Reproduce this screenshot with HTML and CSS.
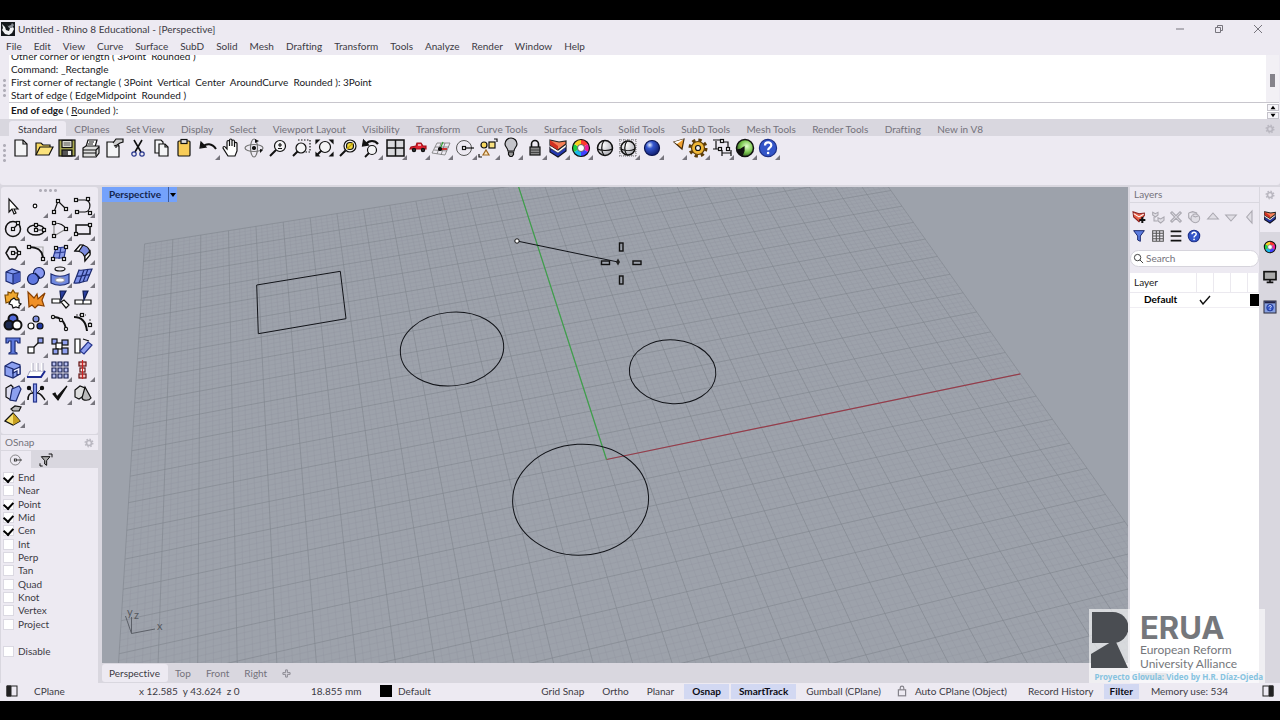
FILE: index.html
```html
<!DOCTYPE html>
<html lang="en">
<head>
<meta charset="utf-8">
<title>Untitled - Rhino 8 Educational - [Perspective]</title>
<link rel="stylesheet" href="styles.css">
</head>
<body>
<svg class="defs" aria-hidden="true">
  <defs>
    <symbol id="more" viewBox="0 0 24 24"><path d="M24 19v5h-5z" fill="#77757d" stroke="none"/></symbol>
    <symbol id="n" viewBox="0 0 4 4" overflow="visible"><rect x=".5" y=".5" width="3" height="3" fill="#fff" stroke="#111" stroke-width="1.2"/></symbol>
    <symbol id="gear" viewBox="0 0 12 12"><circle cx="6" cy="6" r="3" fill="none" stroke="#b9b7c0" stroke-width="2"/><circle cx="6" cy="6" r="4.6" fill="none" stroke="#b9b7c0" stroke-width="1.6" stroke-dasharray="1.8 1.8"/></symbol>
    <symbol id="layers" viewBox="0 0 24 24"><path d="M4 12v4l8 5 8-6v-5l-8 6z" fill="#2338b0" stroke="#112"/><path d="M4 9v3l8 5 8-6V8l-8 6z" fill="#fff" stroke="#334" stroke-width=".6"/><path d="M4 4l9 2 7-1v3l-8 6-8-5z" fill="#f58058" stroke="#222"/><path d="M4 4v5l8 5v-4z" fill="#d03020" stroke="none"/></symbol>
    <symbol id="help" viewBox="0 0 24 24"><circle cx="12" cy="12" r="8.6" fill="#3355c8" stroke="#1c2f88"/><path d="M9 9.5c0-4 6.300-4 6.300-.3 0 2.400-3.200 2.400-3.200 5" fill="none" stroke="#fff" stroke-width="2.200"/><circle cx="12.100" cy="17" r="1.300" fill="#fff" stroke="none"/></symbol>
    <symbol id="wheel" viewBox="0 0 24 24"><g fill="none" stroke-width="5"><path d="M12 6a6 6 0 0 1 5.200 3" stroke="#ff3b30"/><path d="M17.200 9a6 6 0 0 1 0 6" stroke="#f0209a"/><path d="M17.200 15a6 6 0 0 1-5.200 3" stroke="#4040ff"/><path d="M12 18a6 6 0 0 1-5.200-3" stroke="#18b8e8"/><path d="M6.800 15a6 6 0 0 1 0-6" stroke="#20d040"/><path d="M6.800 9a6 6 0 0 1 5.200-3" stroke="#f8d020"/></g><circle cx="12" cy="12" r="8.500" fill="none" stroke="#111"/><circle cx="12" cy="12" r="3.500" fill="#fff" stroke="#444" stroke-width=".8"/></symbol>
    <symbol id="snap" viewBox="0 0 24 24"><circle cx="11" cy="12" r="7.500" fill="none" stroke="#555" stroke-width="1"/><path d="M12 12h9" stroke="#111" fill="none" stroke-width="1.200"/><rect x="9.500" y="10.500" width="3" height="3" fill="#fff" stroke="#111" stroke-width="1.200"/></symbol>
    <radialGradient id="gBlue" cx=".35" cy=".3" r=".8"><stop offset="0" stop-color="#e8f0ff"/><stop offset=".3" stop-color="#3558d0"/><stop offset="1" stop-color="#0a1460"/></radialGradient>
    <radialGradient id="gWhite" cx=".35" cy=".3" r=".8"><stop offset="0" stop-color="#fff"/><stop offset="1" stop-color="#a8a8b0"/></radialGradient>
    <radialGradient id="gGreen" cx=".6" cy=".4" r=".7"><stop offset="0" stop-color="#e4ffd0"/><stop offset=".5" stop-color="#7cc850"/><stop offset="1" stop-color="#1c4010"/></radialGradient>
  </defs>
</svg>

<div class="app">
  <header class="title-bar">
    <svg class="app-icon" viewBox="0 0 14 14" aria-hidden="true"><rect width="14" height="14" fill="#15181c"/><path d="M1 2l3 3 1 3 3 1 1-3 3-1 1 2-2 4-3 2-4-1-3-4 1-2z" fill="#f2f2f4"/><path d="M5 1l2 3 3-1 1-2 2 2-2 3-3 0z" fill="#888c94"/></svg>
    <h1>Untitled - Rhino 8 Educational - [Perspective]</h1>
    <div class="window-buttons">
      <button aria-label="Minimize"><svg viewBox="0 0 10 10"><path d="M1 5h8"/></svg></button>
      <button aria-label="Restore"><svg viewBox="0 0 10 10"><path d="M1.500 3.500h5v5h-5zM3.500 3V1.500h5v5H7"/></svg></button>
      <button aria-label="Close"><svg viewBox="0 0 10 10"><path d="M1 1l8 8M9 1l-8 8"/></svg></button>
    </div>
  </header>

  <nav class="menu-bar" aria-label="Menu">
    <button>File</button><button>Edit</button><button>View</button><button>Curve</button><button>Surface</button><button>SubD</button><button>Solid</button><button>Mesh</button><button>Drafting</button><button>Transform</button><button>Tools</button><button>Analyze</button><button>Render</button><button>Window</button><button>Help</button>
  </nav>

  <section class="command" aria-label="Command line">
    <div class="grip grip-v"></div>
    <div class="command-body">
      <div class="history">
        <div class="history-text">
          <p>Other corner or length ( 3Point&nbsp; Rounded )</p>
          <p>Command: _Rectangle</p>
          <p>First corner of rectangle ( 3Point&nbsp; Vertical&nbsp; Center&nbsp; AroundCurve&nbsp; Rounded ): 3Point</p>
          <p>Start of edge ( EdgeMidpoint&nbsp; Rounded )</p>
        </div>
        <div class="scroll"><div class="thumb"></div></div>
      </div>
      <div class="prompt">
        <p><b>End of edge</b> ( <u>R</u>ounded ):</p>
        <div class="spin">
          <button aria-label="Previous"><svg viewBox="0 0 10 6"><path d="M5 1l3 4H2z"/></svg></button>
          <button aria-label="Next"><svg viewBox="0 0 10 6"><path d="M5 5l3-4H2z"/></svg></button>
        </div>
      </div>
    </div>
  </section>

  <section class="tools" aria-label="Toolbars">
    <div class="tool-tabs">
      <div class="tab-list">
        <button class="on">Standard</button><button>CPlanes</button><button>Set View</button><button>Display</button><button>Select</button><button>Viewport Layout</button><button>Visibility</button><button>Transform</button><button>Curve Tools</button><button>Surface Tools</button><button>Solid Tools</button><button>SubD Tools</button><button>Mesh Tools</button><button>Render Tools</button><button>Drafting</button><button>New in V8</button>
      </div>
      <svg class="gear" viewBox="0 0 12 12"><use href="#gear"/></svg>
    </div>
    <div class="tool-row">
      <div class="grip grip-v"></div>
      <div class="tool-icons">
        <button aria-label="New"><svg class="i" viewBox="0 0 24 24"><path d="M6 4h8l4 4v12H6z" fill="#f4f4f6"/><path d="M14 4v4h4"/></svg></button>
        <button aria-label="Open"><svg class="i" viewBox="0 0 24 24"><path d="M4 19V7h5l2 2h7v3" fill="#f7d860"/><path d="M4 19l4-8h13l-4 8z" fill="#fbe27c"/></svg></button>
        <button aria-label="Save"><svg class="i" viewBox="0 0 24 24"><rect x="4" y="4" width="16" height="16" fill="#a8a850"/><rect x="7" y="4.500" width="10" height="7" fill="#f2f2e8"/><rect x="7" y="14" width="10" height="6" fill="#555"/><rect x="13" y="15" width="3" height="4" fill="#eee" stroke="none"/><path d="M8.500 7h7M8.500 9h7" stroke-width=".8"/><use href="#more"/></svg></button>
        <button aria-label="Print"><svg class="i" viewBox="0 0 24 24"><path d="M7 11l2-7h9l-2 7" fill="#fff"/><path d="M4 12l3-2h13v7l-3 4H4z" fill="#ddd"/><path d="M4 14h13v6M17 14l3-3M4 17h13M10 6h5M9 8h5"/></svg></button>
        <button aria-label="Properties"><svg class="i" viewBox="0 0 24 24"><path d="M5 6h9l3 4v11H5z" fill="#f4f4f6"/><path d="M11 7l3-4h7v3l-3 1-3 2-3 1" fill="#ccc"/><path d="M14 12v-2h3" /></svg></button>
        <button aria-label="Cut"><svg class="i" viewBox="0 0 24 24"><path d="M8 4l7 12M16 4L9 16" stroke-width="1.600"/><circle cx="8" cy="18" r="2.200" stroke="#26358c"/><circle cx="16" cy="18" r="2.200" stroke="#26358c"/></svg></button>
        <button aria-label="Copy"><svg class="i" viewBox="0 0 24 24"><path d="M6 4h6l2 2v11H6z" fill="#f4f4f6"/><path d="M10 8h6l3 3v9h-9z" fill="#f4f4f6"/><path d="M16 8v3h3"/></svg></button>
        <button aria-label="Paste"><svg class="i" viewBox="0 0 24 24"><rect x="6" y="5" width="12" height="15" rx="1" fill="#f8cc58"/><rect x="9" y="3.500" width="6" height="4" fill="#ddd"/></svg></button>
        <button aria-label="Undo"><svg class="i" viewBox="0 0 24 24"><path d="M7 11c3-4 9-4 13 2" stroke-width="2"/><path d="M4 12l1-6 5 5z" fill="#111"/><use href="#more"/></svg></button>
        <button aria-label="Pan"><svg class="i" viewBox="0 0 24 24"><path d="M9 20L4 12c0-2 2-2 3 0l1 1V6c0-2 2.500-2 2.500 0v4V4.500c0-2 2.500-2 2.500 0V10V5.500c0-2 2.500-2 2.500 0V11V7.500c0-1.500 2.500-1.500 2.500 0V15l-2 5z" fill="#fff"/></svg></button>
        <button aria-label="Rotate view"><svg class="i" viewBox="0 0 24 24"><ellipse cx="12" cy="12" rx="9" ry="3.500" stroke="#777"/><ellipse cx="12" cy="12" rx="3.500" ry="9" stroke="#777"/><circle cx="12" cy="12" r="1.500" fill="#111"/><path d="M13 3l4 2-4 2zM18 13l3 1-3 3z" fill="#111" stroke="none"/></svg></button>
        <button aria-label="Zoom"><svg class="i" viewBox="0 0 24 24"><circle cx="14" cy="10" r="5.500" fill="#f4f4f6"/><path d="M10 14l-6 6" stroke-width="2"/><path d="M14 7v4M12 9h4M12 12.500h4"/></svg></button>
        <button aria-label="Zoom window"><svg class="i" viewBox="0 0 24 24"><path d="M9 4h12v12h-5" stroke-dasharray="1.500 1.500"/><circle cx="12" cy="12" r="5" fill="#f4f4f6"/><path d="M8.500 15.500L4 20" stroke-width="2"/></svg></button>
        <button aria-label="Zoom extents"><svg class="i" viewBox="0 0 24 24"><path d="M4 7V4h3zM18 4h3v3zM21 17v3h-3zM4 17v3h3z" fill="#111"/><circle cx="13" cy="11" r="5.500" fill="#f4f4f6"/><path d="M9.500 14.500L5 19" stroke-width="2"/></svg></button>
        <button aria-label="Zoom selected"><svg class="i" viewBox="0 0 24 24"><circle cx="14" cy="10" r="6" fill="#f4f4f6"/><circle cx="14" cy="10" r="3.500" fill="#f0d840"/><path d="M9.500 14.500L4 20" stroke-width="2"/><path d="M11 13l6-6" stroke="#c8a800"/></svg></button>
        <button aria-label="Undo view change"><svg class="i" viewBox="0 0 24 24"><circle cx="13" cy="14" r="4.500" fill="#f4f4f6"/><path d="M10 17l-4 4" stroke-width="1.800"/><path d="M7 8c3-4 9-4 12 0" stroke-width="2.200"/><path d="M3.500 10l1-6 5 5z" fill="#111"/><use href="#more"/></svg></button>
        <button aria-label="Four viewports"><svg class="i" viewBox="0 0 24 24"><rect x="4" y="4" width="17" height="16" fill="#d8d8dc" stroke-width="1.500"/><path d="M12.500 4v16M4 12h17" stroke-width="1.500"/><use href="#more"/></svg></button>
        <button aria-label="Right view"><svg class="i" viewBox="0 0 24 24"><path d="M4 13l1-2 5-1 1-3h4l2 3h3v3H4z" fill="#e02030" stroke="#a01018"/><circle cx="8" cy="14" r="1.600" fill="#333"/><circle cx="17" cy="14" r="1.600" fill="#333"/><path d="M12 9h3" stroke="#fff"/><use href="#more"/></svg></button>
        <button aria-label="Set CPlane"><svg class="i" viewBox="0 0 24 24"><path d="M8 7h13l-5 12-13-2zM6 11l14 0M5 14l13 1M12 7l-4 11M16 7l-4 12" stroke="#777" stroke-width=".8"/><path d="M11 13h7" stroke="#d02020" stroke-width="1.800"/><path d="M11 13l3-7" stroke="#30a030"/><circle cx="11" cy="13" r="1.500" fill="#111"/><use href="#more"/></svg></button>
        <button aria-label="Object snap"><svg class="i" viewBox="0 0 24 24"><use href="#snap"/><use href="#more"/></svg></button>
        <button aria-label="Select"><svg class="i" viewBox="0 0 24 24"><circle cx="8" cy="9" r="3" fill="#f8d860"/><rect x="13" y="6" width="6" height="6" fill="#f8e080"/><path d="M7 19h6l-3-5z" fill="#fbe8c0" stroke="#a06820"/><path d="M18 3h3v3M3 18v3h3"/><use href="#more"/></svg></button>
        <button aria-label="Hide"><svg class="i" viewBox="0 0 24 24"><path d="M9 15c0-3-3-4-3-7a6 6 0 0 1 12 0c0 3-3 4-3 7z" fill="#c4c4ca"/><path d="M9.500 16h5v2.500l-1.500 2h-2l-1.500-2z" fill="#999"/><use href="#more"/></svg></button>
        <button aria-label="Lock"><svg class="i" viewBox="0 0 24 24"><path d="M8.500 11V8a3.500 3.500 0 0 1 7 0v3" stroke-width="1.600"/><rect x="7" y="11" width="10" height="8" fill="#888"/><path d="M7 14h10M7 16.500h10" stroke="#333" stroke-width=".8"/><use href="#more"/></svg></button>
        <button aria-label="Layers"><svg class="i" viewBox="0 0 24 24"><use href="#layers"/><use href="#more"/></svg></button>
        <button aria-label="Object properties"><svg class="i" viewBox="0 0 24 24"><use href="#wheel"/><use href="#more"/></svg></button>
        <button aria-label="Shade"><svg class="i" viewBox="0 0 24 24"><circle cx="12" cy="12" r="7.500" fill="url(#gWhite)" stroke-width="1.500"/><path d="M11 4.500c-3 4-3 11 0 15M4.500 13c4 2 11 2 15 0"/></svg></button>
        <button aria-label="Shade options"><svg class="i" viewBox="0 0 24 24"><path d="M3 4h18M3 8h18M3 12h18M3 16h18M3 20h18M4 3v18M8 3v18M12 3v18M16 3v18M20 3v18" stroke="#555" stroke-width=".8" stroke-dasharray="1 1"/><circle cx="12" cy="12" r="7" fill="url(#gWhite)" stroke-width="1.500"/><path d="M11 5c-3 4-3 10 0 14M5 13c4 2 10 2 14 0"/><use href="#more"/></svg></button>
        <button aria-label="Render"><svg class="i" viewBox="0 0 24 24"><circle cx="12" cy="12" r="7.500" fill="url(#gBlue)" stroke="#0a1450"/><use href="#more"/></svg></button>
        <button aria-label="Spotlight"><svg class="i" viewBox="0 0 24 24"><path d="M11 6l10-3-2 10z" fill="#f0a030" stroke="#442a08"/><path d="M11 6l10-3-7 5z" fill="#fff" stroke="none"/><use href="#more"/></svg></button>
        <button aria-label="Options"><svg class="i" viewBox="0 0 24 24"><circle cx="12" cy="12" r="8" stroke="#5c3c08" stroke-width="3" stroke-dasharray="3.300 3"/><circle cx="12" cy="12" r="6.500" fill="#f0b838" stroke="#5c3c08"/><circle cx="12" cy="12" r="2.500" fill="#f4f4f6"/><use href="#more"/></svg></button>
        <button aria-label="Dimensions"><svg class="i" viewBox="0 0 24 24"><path d="M3 4h8M3 13h6M6 5v8M12 17h9M12 14v6M21 14v6M13 6h5v6"/><use href="#n" x="10" y="3" width="4" height="4"/><use href="#n" x="8" y="11" width="4" height="4"/><use href="#n" x="16" y="11" width="4" height="4"/><use href="#more"/></svg></button>
        <button aria-label="Grasshopper"><svg class="i" viewBox="0 0 24 24"><circle cx="12" cy="12" r="8.500" fill="url(#gGreen)" stroke-width="1.500"/><path d="M4 14l4-1 3-2 0 4-2 5a9 9 0 0 1-5-6z" fill="#111"/><use href="#more"/></svg></button>
        <button aria-label="Help"><svg class="i" viewBox="0 0 24 24"><use href="#help"/><use href="#more"/></svg></button>
      </div>
    </div>
  </section>

  <main class="work">
    <aside class="left">
      <section class="palette" aria-label="Main tools">
        <div class="grip grip-h"></div>
        <div class="palette-grid">
          <button aria-label="Pointer"><svg class="i" viewBox="0 0 24 24"><path d="M8 5v13l3-3 2 5 2-1-2-4h4z" fill="#fff"/></svg></button>
          <button aria-label="Point"><svg class="i" viewBox="0 0 24 24"><circle cx="11" cy="12" r="1.800" fill="#fff"/><use href="#more"/></svg></button>
          <button aria-label="Polyline"><svg class="i" viewBox="0 0 24 24"><path d="M6 18l4-11 8 8"/><use href="#n" x="4" y="16" width="4" height="4"/><use href="#n" x="8" y="5" width="4" height="4"/><use href="#n" x="16" y="13" width="4" height="4"/><use href="#more"/></svg></button>
          <button aria-label="Curve"><svg class="i" viewBox="0 0 24 24"><path d="M5 6h9c7 0 6 12 0 12H6" /><use href="#n" x="3" y="4" width="4" height="4"/><use href="#n" x="15" y="3" width="4" height="4"/><use href="#n" x="4" y="16" width="4" height="4"/><use href="#n" x="17" y="17" width="4" height="4"/><use href="#more"/></svg></button>
          <button aria-label="Circle"><svg class="i" viewBox="0 0 24 24"><circle cx="12" cy="12" r="7.500" stroke-width="1.500"/><path d="M12 12l5-5"/><use href="#n" x="10" y="10" width="4" height="4"/><use href="#n" x="15" y="4" width="4" height="4"/><use href="#more"/></svg></button>
          <button aria-label="Ellipse"><svg class="i" viewBox="0 0 24 24"><ellipse cx="12" cy="13" rx="8.500" ry="5" stroke-width="1.500"/><path d="M12 13V8M12 13h8"/><use href="#n" x="10" y="11" width="4" height="4"/><use href="#n" x="10" y="6" width="4" height="4"/><use href="#n" x="18" y="11" width="4" height="4"/><use href="#more"/></svg></button>
          <button aria-label="Arc"><svg class="i" viewBox="0 0 24 24"><path d="M6 19V6" stroke="#888"/><path d="M6 19l12-7" stroke="#888"/><path d="M6 6c6 0 10 2 12 6"/><use href="#n" x="4" y="4" width="4" height="4"/><use href="#n" x="16" y="10" width="4" height="4"/><use href="#n" x="4" y="17" width="4" height="4"/><use href="#more"/></svg></button>
          <button aria-label="Rectangle"><svg class="i" viewBox="0 0 24 24"><rect x="5" y="8" width="14" height="9" stroke-width="1.500"/><use href="#n" x="17" y="6" width="4" height="4"/><use href="#n" x="3" y="15" width="4" height="4"/><use href="#more"/></svg></button>
          <button aria-label="Polygon"><svg class="i" viewBox="0 0 24 24"><path d="M5 12l3.500-6h6l3.500 6-3.500 6h-6z" stroke-width="1.500"/><path d="M12 12h6"/><use href="#n" x="10" y="10" width="4" height="4"/><use href="#n" x="16" y="10" width="4" height="4"/><use href="#more"/></svg></button>
          <button aria-label="Fillet curves"><svg class="i" viewBox="0 0 24 24"><path d="M5 6h14v13" stroke="#aaa"/><path d="M5 6c9 0 14 3 14 13" stroke-width="2"/><use href="#n" x="3" y="4" width="4" height="4"/><use href="#n" x="17" y="16" width="4" height="4"/><use href="#more"/></svg></button>
          <button aria-label="Surface from points"><svg class="i" viewBox="0 0 24 24"><path d="M8 7l10-1-2 11-11 0z" fill="#8c9ce8" stroke="#26358c"/><path d="M13 6l-2 12M6 12l11-1" stroke="#26358c"/><use href="#n" x="6" y="5" width="4" height="4"/><use href="#n" x="16" y="4" width="4" height="4"/><use href="#n" x="14" y="16" width="4" height="4"/><use href="#n" x="3" y="16" width="4" height="4"/><use href="#more"/></svg></button>
          <button aria-label="Surface fillet"><svg class="i" viewBox="0 0 24 24"><path d="M4 10l5-6c6 0 10 3 10 9l-5 6c0-6-4-9-10-9z" fill="#7c8ce0"/><path d="M4 10l5-6 3 0-4 6zM14 15l5-5v4l-5 6z" fill="#fff"/><use href="#more"/></svg></button>
          <button aria-label="Box"><svg class="i" viewBox="0 0 24 24"><path d="M5 8l6-3 8 3v9l-7 3-7-3z" fill="#8098f0" stroke="#1c2a70"/><path d="M12 10l7-2v9l-7 3z" fill="#4a60c8" stroke="none"/><path d="M5 8l7 2 7-2M12 10v10" stroke="#1c2a70"/><use href="#more"/></svg></button>
          <button aria-label="Boolean union"><svg class="i" viewBox="0 0 24 24"><circle cx="15" cy="9" r="5.500" fill="#8898f0" stroke="#101c50"/><circle cx="9" cy="15" r="5.500" fill="#6078e0" stroke="#101c50"/><path d="M11 9l5 5" stroke="#101c50"/><use href="#more"/></svg></button>
          <button aria-label="Project curves"><svg class="i" viewBox="0 0 24 24"><ellipse cx="12" cy="5" rx="5" ry="2"/><path d="M3 10c6 3 12 3 18 0v9c-6 3-12 3-18 0z" fill="#7088e0" stroke="#1c2a70"/><ellipse cx="12" cy="16" rx="4.500" ry="2.200" fill="#fff" stroke="#99a"/><use href="#more"/></svg></button>
          <button aria-label="Mesh"><svg class="i" viewBox="0 0 24 24"><path d="M8 6c4 1 7-1 13-1l-5 12c-4 0-7 3-13 2z" fill="#7c90e8" stroke="#1c2a70"/><path d="M6 12c4 1 8-2 13-1M13 6l-5 13M17 5l-5 13" stroke="#1c2a70"/><use href="#more"/></svg></button>
          <button aria-label="Explode options"><svg class="i" viewBox="0 0 24 24"><path d="M4 8l3 0 0-3 3 1 2-3 2 3 3 0-1 4 2 2-4 2-3 2-3-1-3 1z" fill="#f0a830" stroke="#7a4800"/><path d="M10 13l3-2 2 2 3 0 0 3 2 1-2 2 0 2-3-1-3 1-1-3-3-1z" fill="#fff"/><use href="#more"/></svg></button>
          <button aria-label="Explode"><svg class="i" viewBox="0 0 24 24"><path d="M5 20L4 5l6 6 3-4 1 5 7-6-3 7 2 6-6-1-3 3-3-3z" fill="#f09028" stroke="#8a4000"/></svg></button>
          <button aria-label="Trim"><svg class="i" viewBox="0 0 24 24"><path d="M4 12h8v4H4zM13 15l3-2 5 5-3 3z" fill="#fff"/><path d="M12 4l6 0-5 9z" fill="#2b3fa0" stroke="#101c50"/></svg></button>
          <button aria-label="Split"><svg class="i" viewBox="0 0 24 24"><path d="M4 13h8v4H4zM12 13h8v4h-8z" fill="#fff"/><path d="M12 4h5l-4 9z" fill="#2b3fa0" stroke="#101c50"/></svg></button>
          <button aria-label="Join"><svg class="i" viewBox="0 0 24 24"><g stroke-width="2"><circle cx="12" cy="8" r="4.500" fill="#5068d8"/><circle cx="8" cy="14" r="4.500" fill="#1c2a50"/><circle cx="16" cy="14" r="4.500" fill="#fff"/></g><use href="#more"/></svg></button>
          <button aria-label="Group"><svg class="i" viewBox="0 0 24 24"><circle cx="12" cy="8" r="3" fill="#8090e0"/><circle cx="7" cy="15" r="3" fill="#fff"/><circle cx="16" cy="15" r="3" fill="#2038a0"/></svg></button>
          <button aria-label="Edit curve"><svg class="i" viewBox="0 0 24 24"><path d="M5 6c8 0 12 5 13 13" stroke-width="1.800"/><circle cx="5" cy="6" r="1.600" fill="#fff"/><circle cx="13" cy="9" r="1.600" fill="#fff"/><circle cx="18" cy="18" r="1.600" fill="#fff"/></svg></button>
          <button aria-label="Control points"><svg class="i" viewBox="0 0 24 24"><path d="M3 6c8 0 12 5 13 14" stroke-width="2"/><path d="M5 4h10M19 8v9" stroke-width=".8" stroke-dasharray="2 1"/><use href="#n" x="9" y="2" width="4" height="4"/><use href="#n" x="17" y="12" width="4" height="4"/><use href="#more"/></svg></button>
          <button aria-label="Text"><svg class="i" viewBox="0 0 24 24"><path d="M5 4h14v5h-2l-1-2h-2v11l2 1v1H8v-1l2-1V7H8L7 9H5z" fill="#5c78dc" stroke="#1c2a70"/></svg></button>
          <button aria-label="Move"><svg class="i" viewBox="0 0 24 24"><rect x="4" y="13" width="6" height="6" fill="#fff"/><path d="M10 13l5-5"/><rect x="14" y="4" width="5" height="5" fill="#90a0f0"/><use href="#more"/></svg></button>
          <button aria-label="Copy objects"><svg class="i" viewBox="0 0 24 24"><rect x="4" y="5" width="5" height="5" fill="#90a0f0"/><rect x="14" y="6" width="6" height="5" fill="#90a0f0"/><rect x="8" y="9" width="6" height="6" fill="#fff"/><rect x="5" y="15" width="5" height="5" fill="#90a0f0"/><rect x="14" y="14" width="6" height="6" fill="#90a0f0"/></svg></button>
          <button aria-label="Rotate"><svg class="i" viewBox="0 0 24 24"><path d="M4 5h5v14H4z" fill="#fff"/><path d="M9 17l8-9 4 3-8 9z" fill="#90a0f0" stroke="#26358c"/><path d="M12 5l6 2" /></svg></button>
          <button aria-label="Solid tools"><svg class="i" viewBox="0 0 24 24"><path d="M4 8l7-4 8 3v9l-7 4-8-3z" fill="#8ca0f0" stroke="#1c2a70"/><path d="M12 12l7-3v7l-3 1v-4l-4 2z" fill="#eef" stroke="#1c2a70"/><path d="M4 8l8 3v9" stroke="#1c2a70"/><use href="#more"/></svg></button>
          <button aria-label="Extrude"><svg class="i" viewBox="0 0 24 24"><path d="M6 13h15l-4 6H3z" fill="#fff" stroke="#8a8aa8" stroke-width=".8"/><path d="M3 19h14l4-6" stroke="#1c2a90" stroke-width="2"/><path d="M8 5v8M13 5v8M18 5v8" stroke="#fff" stroke-width="2"/><path d="M9 5v8M14 5v8M19 5v8" stroke="#9a9ab0" stroke-width=".8"/><use href="#more"/></svg></button>
          <button aria-label="Array"><svg class="i" viewBox="0 0 24 24"><g fill="#b8c0f0" stroke="#182050"><path d="M4 4h4v4H4zM10 4h4v4h-4zM16 4h4v4h-4zM4 10h4v4H4zM10 10h4v4h-4zM16 10h4v4h-4zM4 16h4v4H4zM10 16h4v4h-4zM16 16h4v4h-4z"/></g><use href="#more"/></svg></button>
          <button aria-label="Align"><svg class="i" viewBox="0 0 24 24"><g stroke="#601010"><rect x="8" y="4" width="7" height="4" fill="#f0c0c0"/><rect x="9" y="10" width="5" height="4" fill="#fff"/><rect x="8" y="16" width="7" height="4" fill="#f0c0c0"/></g><path d="M11.500 2v19" stroke="#d02020"/><use href="#more"/></svg></button>
          <button aria-label="Shear"><svg class="i" viewBox="0 0 24 24"><path d="M5 7l5-3 2 2-2 13-5-3z" fill="#dde"/><path d="M11 8l7-3 2 3-5 12-6-1z" fill="#8ca0f0" stroke="#1c2a70"/><use href="#more"/></svg></button>
          <button aria-label="Flow"><svg class="i" viewBox="0 0 24 24"><path d="M4 19c0-6 2-7 5-7M13 12c4 0 5 3 8 7" stroke-width="1.600"/><rect x="9.500" y="3" width="3" height="18" fill="#90a0f0" stroke="#26358c"/><circle cx="5" cy="7" r="1.600" fill="#111"/><circle cx="18" cy="7" r="1.600" fill="#111"/><path d="M5 7l4 5M18 7l-5 5" stroke-width=".8"/><use href="#more"/></svg></button>
          <button aria-label="Check"><svg class="i" viewBox="0 0 24 24"><path d="M5 13l2-1 2 4L19 5l-9 14z" fill="#111"/><use href="#more"/></svg></button>
          <button aria-label="Primitives"><svg class="i" viewBox="0 0 24 24"><path d="M4 9l5-4 5 2v7l-6 4-4-2z" fill="#ddd"/><path d="M14 6l6 11c-2 3-8 3-9 0z" fill="#bbb"/><use href="#more"/></svg></button>
          <button aria-label="Pyramid tools"><svg class="i" viewBox="0 0 24 24"><path d="M4 17l8-8 7 8-7 4z" fill="#f8e070"/><path d="M12 9v12l7-4z" fill="#c8a020" stroke="none"/><path d="M10 5l4-3 6 1-2 4-6 0z" fill="#bbb"/><use href="#more"/></svg></button>
        </div>
      </section>
      <section class="osnap" aria-label="OSnap">
        <div class="panel-head"><h2>OSnap</h2><svg class="gear" viewBox="0 0 12 12"><use href="#gear"/></svg></div>
        <div class="osnap-tabs">
          <button class="on" aria-label="Snaps"><svg class="i small" viewBox="0 0 24 24"><use href="#snap"/></svg></button>
          <button aria-label="Selection filter"><svg class="i small" viewBox="0 0 24 24"><path d="M5 7h13l-5 6v7l-3-2v-5z" fill="#aaa" stroke-width="1.500"/><path d="M16 3h5v5M3 17v4h4" stroke-width="1.500"/></svg></button>
        </div>
        <div class="checks">
          <label><input type="checkbox" checked>End</label>
          <label><input type="checkbox">Near</label>
          <label><input type="checkbox" checked>Point</label>
          <label><input type="checkbox" checked>Mid</label>
          <label><input type="checkbox" checked>Cen</label>
          <label><input type="checkbox">Int</label>
          <label><input type="checkbox">Perp</label>
          <label><input type="checkbox">Tan</label>
          <label><input type="checkbox">Quad</label>
          <label><input type="checkbox">Knot</label>
          <label><input type="checkbox">Vertex</label>
          <label><input type="checkbox">Project</label>
        </div>
        <label class="disable"><input type="checkbox">Disable</label>
      </section>
    </aside>

    <section class="center">
      <div class="viewport">
        <svg class="scene" viewBox="102 187 1026 476" preserveAspectRatio="xMidYMid slice" role="img" aria-label="Perspective viewport">
          <path id="grid-minor" class="minor"/>
          <path id="grid-major" class="major"/>
          <path id="axis-x" class="axis-x"/>
          <path id="axis-y" class="axis-y"/>
          <g class="curves">
            <path d="M256.700 285L340.300 271.300 346 318.700 258.300 333.700z"/>
            <ellipse cx="452" cy="349" rx="51.800" ry="36.800" transform="rotate(-5.600 452 349)"/>
            <ellipse cx="672.600" cy="371.700" rx="43.300" ry="31.900" transform="rotate(4.300 672.600 371.700)"/>
            <ellipse cx="580.600" cy="499.700" rx="68" ry="55.500" transform="rotate(-3.300 580.600 499.700)"/>
            <path d="M517 241l101 21"/>
          </g>
          <circle cx="517" cy="241" r="2.200" fill="#fff" stroke="#111"/>
          <path d="M618 258.500l2 3.500-2 3.500-2-3.500z" fill="#222"/>
          <g class="cursor">
            <rect x="619.500" y="243" width="3.500" height="8"/><rect x="619.500" y="276" width="3.500" height="8"/>
            <rect x="601.500" y="261" width="8" height="3.500"/><rect x="633" y="261" width="8" height="3.500"/>
          </g>
          <path d="M125.500 616l6 17.500V617M131.500 633.500l23.500-4.500" fill="none" stroke="#5c6068"/>
          <g class="axis-names"><text x="157" y="630">x</text><text x="127" y="616">y</text><text x="134" y="619">z</text></g>
        </svg>
        <div class="view-label"><span>Perspective</span><button aria-label="Viewport menu"><svg viewBox="0 0 8 6"><path d="M1 1h6L4 5z"/></svg></button></div>
      </div>
      <div class="view-tabs">
        <button class="on">Perspective</button><button>Top</button><button>Front</button><button>Right</button>
        <button aria-label="Add view"><svg viewBox="0 0 10 10"><path d="M4 1h2v3h3v2H6v3H4V6H1V4h3z" fill="none" stroke="#85838c"/></svg></button>
      </div>
    </section>

    <aside class="right">
      <section class="layers" aria-label="Layers">
        <div class="panel-head"><h2>Layers</h2></div>
        <div class="layer-tools">
          <button aria-label="New layer"><svg class="i small" viewBox="0 0 24 24"><path d="M3 4l9 3 8-1v4l-8 9-8-7z" fill="#e86048" stroke="#822"/><path d="M4 7l8 5 7-4" stroke="#fff"/><path d="M17 12v9M12.500 16.500h9" stroke-width="3"/></svg></button>
          <button aria-label="New sublayer"><svg class="i small off" viewBox="0 0 24 24"><path d="M4 5l4 2 4-2v4l-4 3-4-3zM12 13l4 2 5-3v5l-5 4-4-3zM6 12v6h5"/></svg></button>
          <button aria-label="Delete"><svg class="i small off" viewBox="0 0 24 24"><path d="M4 6l2-2 6 6 6-6 2 2-6 6 6 6-2 2-6-6-6 6-2-2 6-6z"/></svg></button>
          <button aria-label="Duplicate"><svg class="i small off" viewBox="0 0 24 24"><path d="M4 6l6-2 6 2v3M4 6v7l5 5"/><circle cx="14" cy="14" r="6.500"/><path d="M10 10l4 2 5-2"/></svg></button>
          <button aria-label="Up"><svg class="i small off" viewBox="0 0 24 24"><path d="M12 6l8 9H4z"/></svg></button>
          <button aria-label="Down"><svg class="i small off" viewBox="0 0 24 24"><path d="M12 18l8-9H4z"/></svg></button>
          <button aria-label="Left"><svg class="i small off" viewBox="0 0 24 24"><path d="M7 12l8-9v18z"/></svg></button>
          <button aria-label="Filter"><svg class="i small" viewBox="0 0 24 24"><path d="M4 4h16l-6 8v8l-4-2v-6z" fill="#5c7ce0" stroke="#1c2a70" stroke-width="1.500"/></svg></button>
          <button aria-label="Columns"><svg class="i small" viewBox="0 0 24 24"><path d="M4 4h16v16H4zM4 8h16M4 12h16M4 16h16M9.500 4v16M14.500 4v16" stroke="#555"/></svg></button>
          <button aria-label="Menu"><svg class="i small" viewBox="0 0 24 24"><path d="M4 5h16M4 12h16M4 19h16" stroke-width="2.500"/></svg></button>
          <button aria-label="Help"><svg class="i small" viewBox="0 0 24 24"><use href="#help"/></svg></button>
        </div>
        <label class="search"><svg viewBox="0 0 12 12"><circle cx="5" cy="5" r="3.500"/><path d="M7.500 7.500L11 11"/></svg><input type="text" placeholder="Search" aria-label="Search"></label>
        <div class="layer-list">
          <table>
            <colgroup><col><col class="c"><col class="c"><col class="c"><col class="c last"></colgroup>
            <thead><tr><th>Layer</th><th></th><th></th><th></th><th></th></tr></thead>
            <tbody><tr><td class="name">Default</td><td><svg class="tick" viewBox="0 0 12 10"><path d="M1 5l3 4 7-8"/></svg></td><td></td><td></td><td><span class="swatch"></span></td></tr></tbody>
          </table>
        </div>
        <div class="hscroll"><div></div></div>
      </section>
      <nav class="side-tabs" aria-label="Panels">
        <div class="side-gear"><svg class="gear" viewBox="0 0 12 12"><use href="#gear"/></svg></div>
        <button class="on" aria-label="Layers"><svg class="i small" viewBox="0 0 24 24"><use href="#layers"/></svg></button>
        <button aria-label="Properties"><svg class="i small" viewBox="0 0 24 24"><use href="#wheel"/></svg></button>
        <button aria-label="Display"><svg class="i small" viewBox="0 0 24 24"><rect x="3" y="4" width="18" height="12" fill="#aaa" stroke-width="2.500"/><path d="M12 16v4M7 20h10" stroke-width="2.500"/></svg></button>
        <button aria-label="Help"><svg class="i small" viewBox="0 0 24 24"><rect x="3" y="3" width="18" height="18" fill="#88a0e0" stroke="#334"/><path d="M4 5h16" stroke="#224" stroke-width="3"/><svg x="5" y="6" width="14" height="14"><use href="#help"/></svg></svg></button>
      </nav>
      <div class="credit">
        <svg class="erua" viewBox="0 0 37 56" aria-hidden="true"><path d="M1 0h21a15 15 0 0 1 0 31H1z" fill="#4a4d52"/><path d="M20 30h5l12 26H0V42z" fill="#4a4d52"/></svg>
        <div class="erua-text"><strong>ERUA</strong><span>European Reform</span><span>University Alliance</span></div>
        <p>Proyecto Glovula: Video by H.R. Díaz-Ojeda</p>
      </div>
    </aside>
  </main>

  <footer class="status">
    <button class="side-toggle" aria-label="Toggle left sidebar"><svg viewBox="0 0 12 12"><rect x="1" y="1" width="10" height="10"/><path d="M1 1h4v10H1z" fill="#222"/></svg></button>
    <span class="f-plane">CPlane</span>
    <span class="f-pos">x 12.585&nbsp; y 43.624&nbsp; z 0</span>
    <span class="f-dist">18.855 mm</span>
    <button class="f-layer"><i class="swatch"></i>Default</button>
    <div class="modes">
      <button>Grid Snap</button><button>Ortho</button><button>Planar</button><button class="on wide">Osnap</button><button class="on wide">SmartTrack</button><button>Gumball (CPlane)</button><button class="auto"><svg viewBox="0 0 8 10"><rect x="1" y="4" width="6" height="5"/><path d="M2.500 4V2.500a1.500 1.500 0 0 1 3 0V4"/></svg>Auto CPlane (Object)</button><button>Record History</button><button class="on">Filter</button><button>Memory use: 534</button>
    </div>
    <button class="side-toggle end" aria-label="Toggle right sidebar"><svg viewBox="0 0 12 12"><rect x="1" y="1" width="10" height="10"/><path d="M7 1h4v10H7z" fill="#222"/></svg></button>
  </footer>
</div>
<script src="grid.js"></script>
</body>
</html>
```

FILE: styles.css
```css
* { box-sizing: border-box; margin: 0; padding: 0; }

:root {
  --panel: #edeaf2;
  --strip: #d9d7df;
  --ink: #3c3a44;
  --muted: #74727b;
  --ui: Lato, "Noto Sans", sans-serif;
}

body {
  display: flex;
  height: 100vh;
  padding: 20px 0 19px;
  background: #000;
  color: var(--ink);
  font: 10px/13px var(--ui);
  font-variant-ligatures: none;
  overflow: hidden;
}

button, input { font: inherit; font-variant-ligatures: inherit; color: inherit; background: none; border: 0; }
h1, h2 { font-size: inherit; font-weight: normal; }
.defs { position: absolute; width: 0; height: 0; }

.app { flex: 1; min-width: 0; display: flex; flex-direction: column; background: var(--strip); }

.i { display: block; flex: none; width: 24px; height: 24px; overflow: visible; fill: none; stroke: #111; stroke-width: 1.2; }
.i.small { width: 16px; height: 16px; stroke-width: 1.6; }
.i.off { stroke: #aaa8b0; fill: #e0dee5; }
.gear { width: 10px; height: 10px; display: block; }

/* title and menu */
.title-bar { display: flex; align-items: center; height: 18px; padding: 0 17px 0 1px; gap: 3px; background: var(--panel); }
.app-icon { width: 14px; height: 14px; }
.window-buttons { display: flex; gap: 29px; margin-left: auto; }
.window-buttons svg { display: block; width: 10px; height: 10px; fill: none; stroke: #77757d; }
.menu-bar { display: flex; height: 17px; padding-left: 6px; gap: 12px; background: var(--panel); align-items: center; }

/* command line */
.command { display: flex; height: 64px; background: var(--panel); }
.grip-v { width: 3px; margin: auto 3px; height: 19px; background: radial-gradient(circle, #b0aeb8 0 1px, transparent 2px) 0 0 / 3px 5px; }
.command-body { flex: 1; display: flex; flex-direction: column; color: #18181c; background: #fff; margin-right: 1px; }
.history { display: flex; flex: 1; min-height: 0; overflow: hidden; }
.history-text { flex: 1; display: flex; flex-direction: column; justify-content: flex-end; padding-left: 2px; white-space: nowrap; }
.scroll { width: 13px; background: #f2f0f5; padding: 19px 4px; }
.thumb { height: 13px; background: #85838b; }
.prompt { display: flex; align-items: center; height: 17px; border-top: 1px solid #c8c6cd; padding-left: 2px; }
.prompt p { flex: 1; padding-bottom: 1px; }
.spin { display: flex; flex-direction: column; gap: 1px; width: 12px; }
.spin button { border: 1px solid #c4c2ca; height: 7px; background: #f6f5f9; }
.spin svg { display: block; width: 10px; height: 5px; }

/* toolbars */
.tools { height: 67px; display: flex; flex-direction: column; margin-bottom: 1px; }
.tool-tabs { display: flex; justify-content: space-between; height: 17px; padding: 2px 5px 0 9px; }
.tab-list { display: flex; justify-content: space-between; flex: 0 1 982px; }
.tab-list button { color: var(--muted); padding: 1px 8px 0; white-space: nowrap; }
.tab-list .on { background: var(--panel); color: var(--ink); border-radius: 3px 3px 0 0; padding: 1px 9px 0; }
.tool-tabs .gear { margin-top: 3px; }
.tool-row { flex: 1; display: flex; background: var(--panel); border-radius: 0 0 3px 3px; margin-bottom: 1px; }
.tool-row .grip { margin: 7px 3px 0; }
.tool-icons { display: grid; grid-template-columns: repeat(33, minmax(0, 1fr)); flex: 0 1 771px; align-content: start; }
.tool-icons button { display: flex; justify-content: center; height: 24px; }

/* main area */
.work { flex: 1; min-height: 0; display: flex; }
.left { width: 97px; margin: 0 4px 0 1px; display: flex; flex-direction: column; gap: 1px; }
.palette { background: var(--panel); border-radius: 3px; padding: 1px 3px 6px 0; }
.grip-h { width: 20px; height: 3px; margin: 1px auto 2px; background: radial-gradient(circle, #b0aeb8 0 1px, transparent 2px) 0 0 / 5px 3px; }
.palette-grid { display: grid; grid-template-columns: repeat(4, minmax(0, 1fr)); grid-template-rows: repeat(10, minmax(0, 1fr)); height: 234px; }
.palette-grid button { display: flex; justify-content: center; align-items: center; }
.osnap { flex: 1; background: var(--panel); }
.panel-head { display: flex; align-items: center; justify-content: space-between; height: 16px; padding: 0 4px; color: var(--muted); }
.osnap .panel-head { border-bottom: 1px solid var(--strip); }
.osnap-tabs { display: flex; height: 17px; background: var(--strip); }
.osnap-tabs button { width: 30px; display: flex; justify-content: center; align-items: center; }
.osnap-tabs .on { background: var(--panel); }
.checks { display: grid; grid-auto-rows: 1fr; height: 160px; margin: 3px 0 14px; }
.checks label, .disable { display: flex; align-items: center; gap: 4px; padding-left: 2px; }
input[type="checkbox"] { appearance: none; width: 11px; height: 11px; background: #fff; border: 1px solid #dbd9e2; display: grid; place-items: center; }
input[type="checkbox"]:checked::before { content: ""; width: 5px; height: 7px; margin-bottom: 2px; border: solid #000; border-width: 0 2px 2px 0; transform: rotate(42deg); }

.center { flex: 1; min-width: 0; display: flex; flex-direction: column; }
.viewport { flex: 1; min-height: 0; position: relative; background: #9da2ab; overflow: hidden; }
.scene { position: absolute; inset: 0; width: 100%; height: 100%; }
.minor, .major, .axis-x, .axis-y { fill: none; }
.minor { stroke: #9095a0; stroke-width: .35; }
.major { stroke: #80858d; stroke-width: .6; }
.axis-x { stroke: #963c4a; stroke-width: 1.2; }
.axis-y { stroke: #3ea04a; stroke-width: 1.2; }
.curves { fill: none; stroke: #111318; }
.cursor { fill: none; stroke: #111; stroke-width: 1.4; }
.axis-names { fill: #55595f; font: 11px var(--ui); }
.view-label { position: absolute; left: 0; top: 0; display: flex; height: 15px; background: #74a2fb; color: #15264e; font-weight: bold; line-height: 15px; }
.view-label span { padding: 0 7px; }
.view-label button { border-left: 1px solid #3c5a98; width: 9px; }
.view-label svg { display: block; width: 8px; height: 6px; }
.view-tabs { height: 20px; display: flex; align-items: center; color: var(--muted); }
.view-tabs button { padding: 0 8px 0 7px; height: 18px; }
.view-tabs .on { background: var(--panel); color: var(--ink); border-radius: 3px; }
.view-tabs svg { width: 9px; height: 9px; display: block; }

.right { width: 152px; padding-left: 2px; display: flex; position: relative; }
.layers { width: 129px; display: flex; flex-direction: column; background: var(--panel); }
.layers .panel-head { height: 15px; padding-bottom: 1px; }
.layer-tools { display: grid; grid-template-columns: repeat(7, 1fr); grid-auto-rows: 19px; padding: 4px 0; border-top: 1px solid var(--strip); }
.layer-tools button { display: grid; place-items: center; }
.search { display: flex; align-items: center; gap: 2px; height: 17px; margin: 1px 0 6px; padding: 0 2px; background: #fff; border: 1px solid #d6d4dc; border-radius: 9px; }
.search svg { width: 11px; height: 11px; flex: none; fill: none; stroke: #333; }
.search input { min-width: 0; width: 100%; outline: 0; }
.search input::placeholder { color: var(--muted); opacity: 1; }
.layer-list { flex: 1; background: #fff; }
table { width: 100%; border-collapse: collapse; table-layout: fixed; color: #222; }
.c { width: 17px; }
.last { width: 11px; }
th { height: 19px; text-align: left; font-weight: normal; padding-left: 4px; border-right: 1px solid #ebe9ef; border-bottom: 1px solid #ebe9ef; }
td { height: 15px; border-bottom: 1px solid #f0eef3; }
.name { font-weight: bold; color: #000; padding-left: 14px; }
.tick { display: block; width: 12px; height: 10px; margin-left: 2px; fill: none; stroke: #111; stroke-width: 1.4; }
.swatch { display: block; width: 12px; height: 12px; background: #000; }
td .swatch { width: 9px; margin-left: auto; }
.hscroll { height: 12px; padding: 2px; }
.hscroll div { width: 28px; height: 7px; margin-left: 8px; background: #c4c2ca; border-radius: 2px; }
.side-tabs { flex: 1; margin-left: 1px; display: flex; flex-direction: column; }
.side-gear { height: 15px; background: var(--panel); display: grid; place-items: center; }
.side-tabs button { height: 30px; display: grid; place-items: center; }
.side-tabs .on { background: var(--panel); }

.credit { position: absolute; right: 15px; bottom: 0; width: 176px; height: 74px; padding: 3px 2px 0; display: grid; grid-template-columns: 49px 1fr; grid-template-rows: 59px 12px; background: rgba(255, 255, 255, .6); white-space: nowrap; }
.erua { width: 37px; height: 56px; }
.erua-text { display: flex; flex-direction: column; color: #75777b; font: 12px/14px Lato, sans-serif; }
.erua-text strong { font: bold 31px/31px Inter, sans-serif; }
.credit p { grid-column: 1 / -1; text-align: right; color: #86c3e0; font: bold 8px/12px "Noto Sans", sans-serif; }

/* status bar */
.status { display: flex; align-items: center; height: 18px; padding: 0 6px 2px; background: var(--panel); white-space: nowrap; }
.side-toggle svg { display: block; width: 12px; height: 12px; fill: none; stroke: #222; }
.f-plane { width: 105px; margin-left: 16px; }
.f-pos { width: 172px; }
.f-dist { width: 69px; }
.f-layer { display: flex; align-items: center; gap: 6px; }
.modes { display: flex; gap: 2px; margin-left: auto; margin-right: 24px; }
.modes button { height: 15px; padding: 0 8px; }
.modes .on { padding: 0 6px; background: #d2d8f2; color: #0c0c14; font-weight: bold; }
.modes .wide { padding: 0 8px; }
.modes button:last-child { padding: 0 10px; }
.modes .auto { display: flex; align-items: center; gap: 8px; padding: 0 11px 0 6px; }
.auto svg { width: 10px; height: 12px; fill: none; stroke: #85838b; }
```

FILE: grid.js
```js
// Construction-plane grid: 14 major cells either side of the origin, 5 minor cells in each.
const HALF = 14;
const STEPS = 5;

// Perspective map from plane coordinates (in major cells) to viewport coordinates.
function project(u, v) {
  const s = u / HALF;
  const t = v / HALF;
  const w = 1 + 0.0755 * s + 0.2855 * t;
  return [
    (606.5 + 490.94 * s + 59.4 * t) / w,
    (459.5 - 57.37 * s - 221.7 * t) / w
  ];
}

function segment(u1, v1, u2, v2) {
  const a = project(u1, v1).map(n => n.toFixed(2));
  const b = project(u2, v2).map(n => n.toFixed(2));
  return `M${a}L${b}`;
}

let minor = "";
let major = "";
for (let k = -HALF * STEPS; k <= HALF * STEPS; k++) {
  const p = k / STEPS;
  const pair = segment(p, -HALF, p, HALF) + segment(-HALF, p, HALF, p);
  if (k % STEPS) minor += pair;
  else major += pair;
}

document.getElementById("grid-minor").setAttribute("d", minor);
document.getElementById("grid-major").setAttribute("d", major);
document.getElementById("axis-x").setAttribute("d", segment(0, 0, HALF, 0));
document.getElementById("axis-y").setAttribute("d", segment(0, 0, 0, HALF));
```
